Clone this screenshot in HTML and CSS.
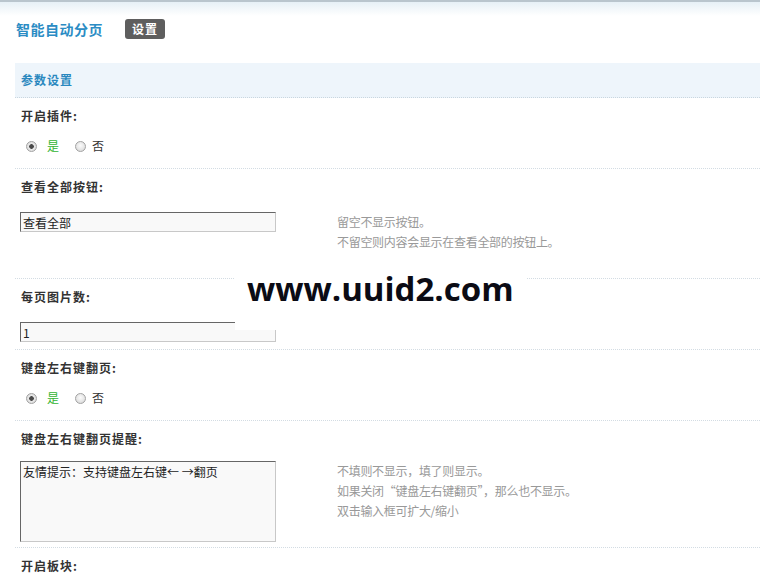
FILE: index.html
```html
<!DOCTYPE html>
<html lang="zh-CN">
<head>
<meta charset="utf-8">
<title>智能自动分页</title>
<link rel="stylesheet" href="styles.css">
</head>
<body>
<div class="header">
  <h3 class="title">智能自动分页</h3>
  <span class="badge">设置</span>
</div>
<div class="page">
  <div class="section-head">参数设置</div>

  <div class="row-label">开启插件:</div>
  <div class="row-value radios sep">
    <input type="radio" class="radio" name="open" checked><label class="yes">是</label>
    <input type="radio" class="radio r2" name="open"><label class="no">否</label>
  </div>

  <div class="row-label">查看全部按钮:</div>
  <div class="row-value grid pad-a sep">
    <input type="text" class="txt" value="查看全部">
    <div class="tips">留空不显示按钮。<br>不留空则内容会显示在查看全部的按钮上。</div>
  </div>

  <div class="row-label">每页图片数:</div>
  <div class="row-value grid pad-b sep">
    <input type="text" class="txt" value="1">
    <div class="tips"></div>
  </div>

  <div class="row-label">键盘左右键翻页:</div>
  <div class="row-value radios sep">
    <input type="radio" class="radio" name="key" checked><label class="yes">是</label>
    <input type="radio" class="radio r2" name="key"><label class="no">否</label>
  </div>

  <div class="row-label">键盘左右键翻页提醒:</div>
  <div class="row-value grid pad-c sep">
    <textarea class="area">友情提示：支持键盘左右键← →翻页</textarea>
    <div class="tips">不填则不显示，填了则显示。<br>如果关闭“键盘左右键翻页”，那么也不显示。<br>双击输入框可扩大/缩小</div>
  </div>

  <div class="row-label">开启板块:</div>
</div>

<div class="watermark">www.uuid2.com</div>
</body>
</html>
```

FILE: styles.css
```css
html, body {
  margin: 0;
  padding: 0;
  background: #fff;
}
body {
  font-family: "Noto Sans CJK SC", "Noto Sans", sans-serif;
  font-size: 12px;
  color: #333;
  overflow: hidden;
}
.header {
  border-top: 2px solid #b9c5cd;
  background: linear-gradient(#e6f0f6, #ffffff 14px);
  padding: 17px 0 24px 16px;
  display: flex;
  align-items: center;
  height: 20px;
}
.title {
  margin: 0 22px 0 0;
  font-size: 14px;
  line-height: 20px;
  font-weight: bold;
  letter-spacing: 0.5px;
  color: #2b8cc4;
}
.badge {
  display: inline-block;
  width: 40px;
  height: 20px;
  line-height: 20px;
  text-align: center;
  background: #5e5e5e;
  color: #fff;
  font-weight: bold;
  font-size: 12px;
  letter-spacing: 1px;
  border-radius: 3px;
}
.page {
  margin-left: 15px;
}
.section-head {
  height: 34px;
  line-height: 34px;
  padding-left: 6px;
  background: #eef5fb;
  border-bottom: 1px dotted #c9d6df;
  color: #2a88bf;
  font-weight: bold;
  letter-spacing: 1px;
}
.row-label {
  padding: 8px 0 0 6px;
  line-height: 20px;
  font-weight: bold;
  letter-spacing: 1px;
  color: #333;
}
.row-value {
  padding-left: 5px;
}
.sep {
  border-bottom: 1px dotted #d3dce3;
}
.radios {
  display: flex;
  align-items: center;
  padding: 10px 0 12px 11px;
  line-height: 20px;
}
.radio {
  -webkit-appearance: none;
  appearance: none;
  margin: 0 10px 0 0;
  width: 11px;
  height: 11px;
  border-radius: 50%;
  border: 1px solid #a2a2a2;
  background: radial-gradient(circle at 50% 40%, #fbfbfb 0, #e6e6e6 55%, #d0d0d0 100%);
  box-sizing: border-box;
  position: relative;
}
.radio:checked {
  background: radial-gradient(circle, #4a4a4a 0, #4a4a4a 2px, #e9e9e9 2.6px, #d4d4d4 100%);
}
.radio.r2 {
  margin-right: 6px;
}
.yes {
  color: #33b433;
  margin-right: 16px;
}
.no {
  color: #333;
}
.grid {
  display: grid;
  grid-template-columns: 256px 1fr;
  column-gap: 61px;
  align-items: start;
}
.pad-a { padding-top: 15px; padding-bottom: 26px; }
.pad-b { padding-top: 15px; padding-bottom: 7px; }
.pad-c { padding-top: 12px; padding-bottom: 5px; }
.txt {
  box-sizing: border-box;
  width: 256px;
  height: 20px;
  margin: 0;
  padding: 0 2px;
  border: 1px solid;
  border-color: #666 #c8c8c8 #c8c8c8 #666;
  background: #f9f9f9;
  font-family: "Noto Sans CJK SC", "Noto Sans", sans-serif;
  font-size: 12px;
  color: #222;
  outline: none;
}
.area {
  box-sizing: border-box;
  width: 256px;
  height: 81px;
  margin: 0;
  padding: 2px 2px;
  border: 1px solid;
  border-color: #666 #c8c8c8 #c8c8c8 #666;
  background: #f9f9f9;
  font-family: "Noto Sans CJK SC", "Noto Sans", sans-serif;
  font-size: 12px;
  line-height: 16px;
  color: #222;
  resize: none;
  outline: none;
  display: block;
}
.tips {
  color: #999;
  line-height: 20px;
  letter-spacing: -0.3px;
}
.watermark {
  position: absolute;
  left: 235px;
  top: 250px;
  width: 292px;
  height: 80px;
  box-sizing: border-box;
  padding-left: 12px;
  background: #fff;
  font-family: "Open Sans", "Liberation Sans", sans-serif;
  font-weight: bold;
  font-size: 33px;
  line-height: 78px;
  color: #0b0b14;
}
```
